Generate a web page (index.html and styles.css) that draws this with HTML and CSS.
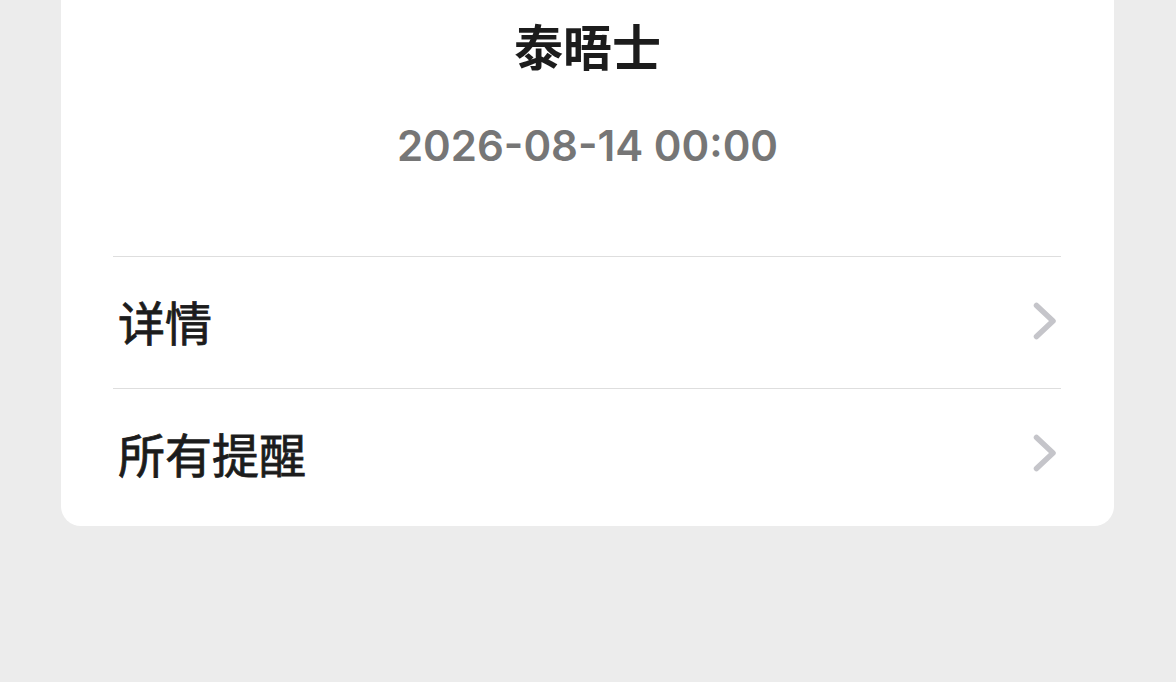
FILE: index.html
```html
<!DOCTYPE html>
<html>
<head>
  <meta charset="UTF-8">
  <title>泰晤士</title>
  <link rel="stylesheet" href="styles.css">
</head>
<body>
  <div class="card">
    <div class="event-title">泰晤士</div>
    <div class="event-date">2026-08-14 00:00</div>

    <div class="list">
      <div class="list-row">
        <span class="row-label">详情</span>
        <svg class="chevron" width="24" height="38" viewBox="0 0 24 38">
          <path d="M3.5 3.5 L20 19 L3.5 34.5" />
        </svg>
      </div>
      <div class="list-row">
        <span class="row-label">所有提醒</span>
        <svg class="chevron" width="24" height="38" viewBox="0 0 24 38">
          <path d="M3.5 3.5 L20 19 L3.5 34.5" />
        </svg>
      </div>
    </div>
  </div>
</body>
</html>
```

FILE: styles.css
```css
body {
  margin: 0;
  background-color: #ececec;
  font-family: "Inter", "Noto Sans CJK SC", sans-serif;
}
.card {
  margin: 0 62px 0 61px;
  padding: 17px 0 6px;
  background-color: #ffffff;
  border-radius: 0 0 20px 20px;
}
.event-title {
  font-family: "Noto Sans CJK SC", sans-serif;
  font-size: 49px;
  line-height: 56px;
  font-weight: 700;
  color: #1c1c1c;
  text-align: center;
}
.event-date {
  margin-top: 45px;
  margin-bottom: 82px;
  font-size: 42px;
  line-height: 56px;
  font-weight: 600;
  color: #767676;
  text-align: center;
}
.list {
  margin: 0 53px 0 52px;
}
.list-row {
  display: flex;
  align-items: center;
  justify-content: space-between;
  height: 132px;
  border-top: 1px solid #dedede;
  padding: 0 4px 5px 5px;
  box-sizing: border-box;
}
.row-label {
  font-family: "Noto Sans CJK SC", sans-serif;
  font-size: 47px;
  font-weight: 400;
  -webkit-text-stroke: 0.8px #1c1c1c;
  color: #1c1c1c;
}
.chevron {
  display: block;
  margin-top: 2px;
}
.chevron path {
  fill: none;
  stroke: #c5c5ca;
  stroke-width: 5.5;
  stroke-linecap: round;
  stroke-linejoin: round;
}
```
